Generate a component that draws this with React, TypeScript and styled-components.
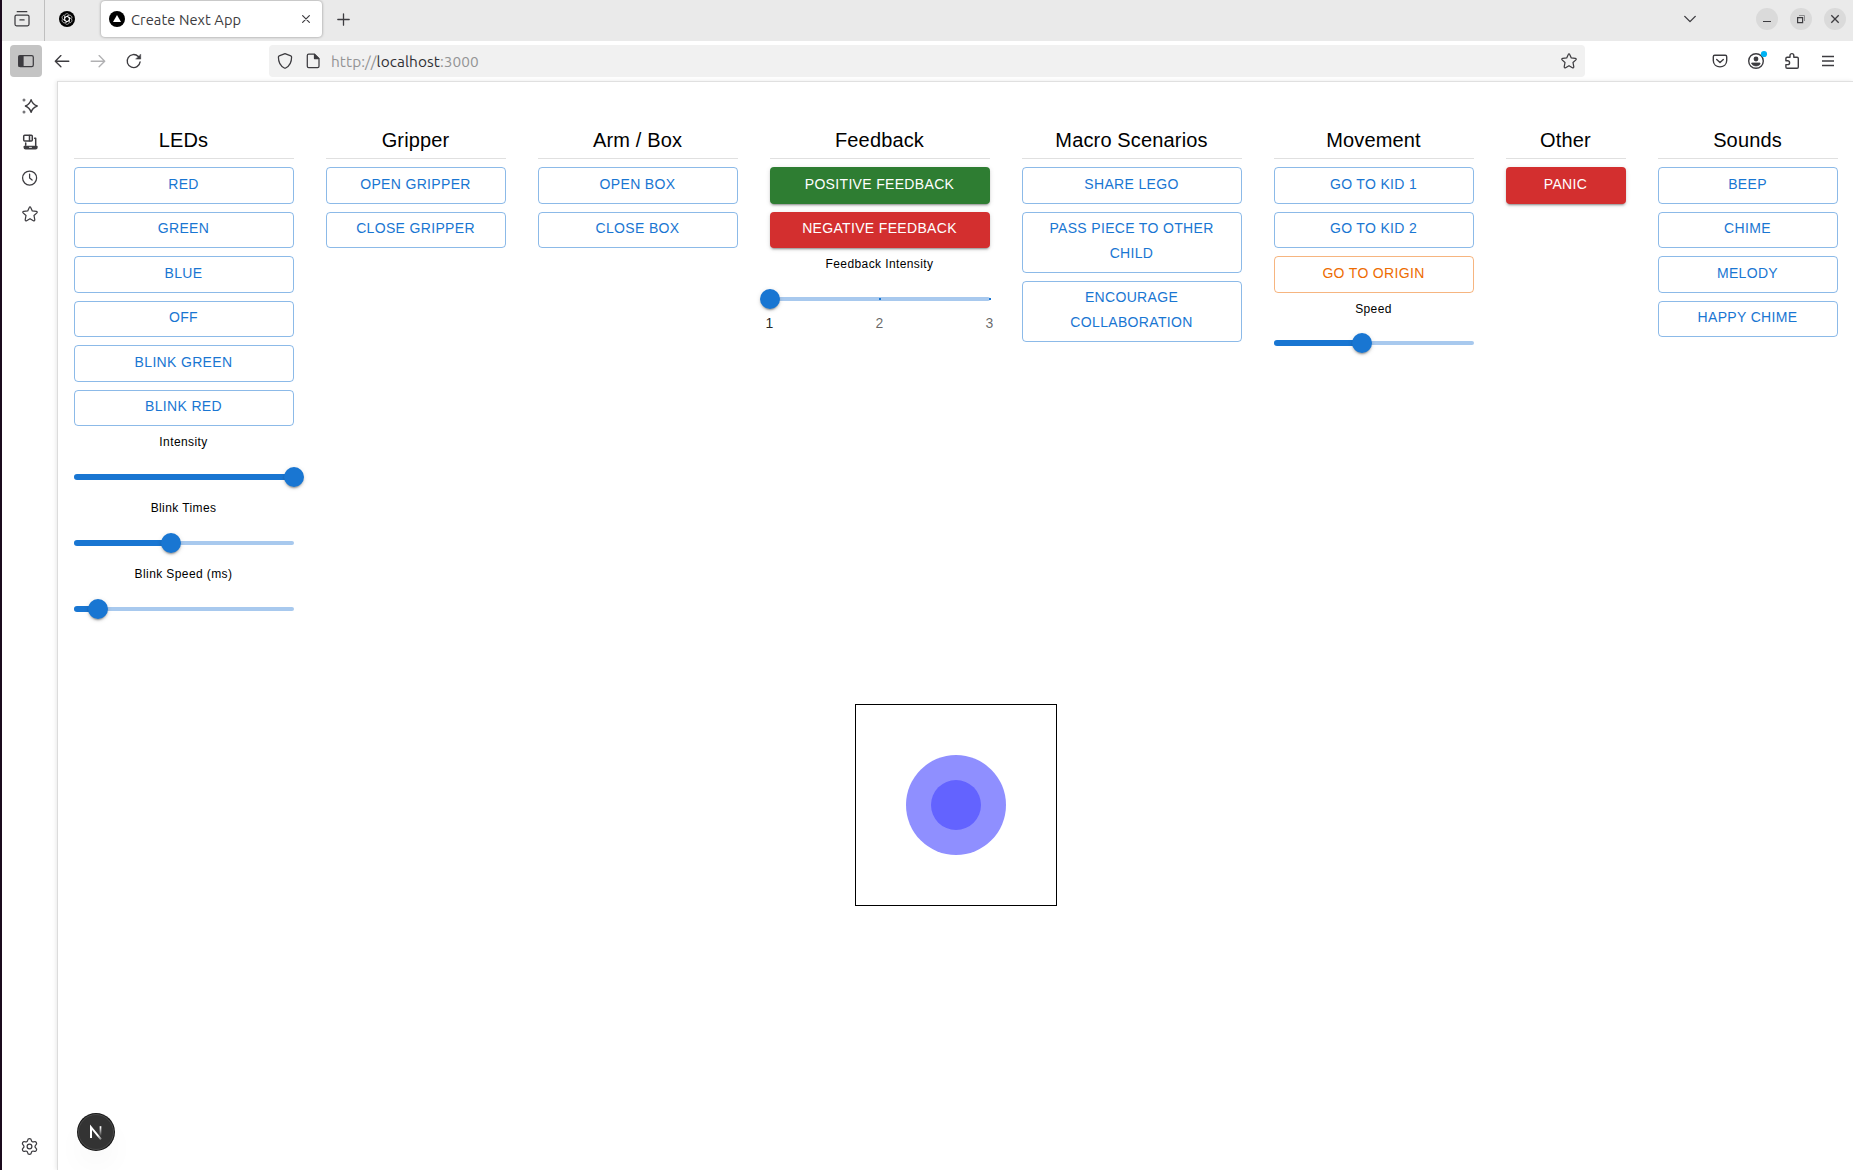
import React from "react";
import styled, { createGlobalStyle, css } from "styled-components";
import { Settings } from "lucide-react";

const GlobalStyle = createGlobalStyle`
  *, *::before, *::after { box-sizing: border-box; }
  html, body { margin: 0; padding: 0; background: #fff; }
  body { overflow: hidden; }
`;

const appFont = `"Liberation Sans", Helvetica, Arial, sans-serif`;
const chromeFont = `Ubuntu, "Open Sans", "Noto Sans", sans-serif`;

const Window = styled.div`
  width: 1853px;
  height: 1170px;
  display: flex;
  flex-direction: column;
  background: #fff;
  border-left: 2px solid #1b0a1d;
  overflow: hidden;
  color: #3d3c40;
`;

/* ---------- tab strip ---------- */

const TabStrip = styled.div`
  height: 41px;
  flex: none;
  display: flex;
  align-items: flex-start;
  background: #eaeaea;
`;

const ArchiveCell = styled.div`
  width: 43px;
  height: 41px;
  padding: 11px 0 0 12px;
  border-right: 1px solid #bfbfbf;
`;

const PinnedTab = styled.div`
  width: 56px;
  height: 41px;
  padding: 11px 0 0 14px;
`;

const ActiveTab = styled.div`
  width: 221px;
  height: 36px;
  margin-top: 1px;
  padding: 0 10px 0 8px;
  display: flex;
  align-items: center;
  border-radius: 4px;
  background: #fff;
  box-shadow: 0 0 3px rgba(0, 0, 0, 0.4);
`;

const TabTitle = styled.span`
  flex: 1;
  margin-left: 6px;
  padding-top: 1px;
  font: 14.667px/20px ${chromeFont};
  letter-spacing: 0.08px;
  white-space: nowrap;
`;

const NewTab = styled.div`
  padding: 13px 0 0 15px;
  line-height: 0;
`;

const WindowControls = styled.div`
  margin-left: auto;
  display: flex;
  align-items: flex-start;
  padding: 8px 7px 0 0;
`;

const TabListButton = styled.div`
  width: 14px;
  margin: 4px 59px 0 0;
  line-height: 0;
`;

const ControlButton = styled.div`
  width: 22px;
  height: 22px;
  margin-left: 12px;
  border-radius: 50%;
  background: #dadada;
  line-height: 0;
  &:nth-child(2) { margin-left: 0; }
`;

/* ---------- toolbar ---------- */

const Toolbar = styled.div`
  height: 40px;
  flex: none;
  display: flex;
  align-items: center;
  padding: 0 17px 0 8px;
`;

const SidebarToggle = styled.div`
  width: 32px;
  height: 32px;
  display: grid;
  place-items: center;
  border-radius: 4px;
  background: #c4c4c4;
`;

const NavIcons = styled.div`
  display: flex;
  gap: 20px;
  margin-left: 12px;
`;

const UrlBar = styled.div`
  width: 1316px;
  height: 32px;
  margin-left: 127px;
  padding: 0 8px;
  display: flex;
  align-items: center;
  border-radius: 4px;
  background: #f1f1f1;
`;

const UrlIcons = styled.div`
  display: flex;
  gap: 12px;
  width: 54px;
`;

const Url = styled.span`
  flex: 1;
  padding-top: 1px;
  font: 15.4px/20px ${chromeFont};
  letter-spacing: 0.08px;
  color: #949495;
  white-space: pre;
  b { font-weight: 400; color: #303035; }
`;

const ToolbarActions = styled.div`
  display: flex;
  gap: 20px;
  margin-left: auto;
`;

const IconSvg = styled.svg`
  display: block;
  flex: none;
  overflow: visible;
`;

/* ---------- body ---------- */

const Main = styled.div`
  flex: 1;
  display: flex;
  min-height: 0;
`;

const Sidebar = styled.nav`
  width: 55px;
  flex: none;
  display: flex;
  flex-direction: column;
  gap: 20px;
  padding: 17px 0 16px 20px;
`;

const GearIcon = styled(Settings)`
  width: 19px;
  height: 19px;
  margin: auto 0 -1.5px -2px;
  color: #3d3c40;
`;

const Page = styled.main`
  position: relative;
  flex: 1;
  display: flex;
  flex-direction: column;
  align-items: center;
  border-top: 1px solid #e0e0e0;
  border-left: 1px solid #dcdcdc;
  box-shadow: -1px 0 4px rgba(0, 0, 0, 0.09);
  font-family: ${appFont};
  color: #000;
`;

const Columns = styled.div`
  height: 622px;
  flex: none;
  display: flex;
  align-items: flex-start;
  gap: 32px;
  padding-top: 40px;
`;

const Column = styled.section<{ $width: number }>`
  width: ${(p) => p.$width}px;
  display: flex;
  flex-direction: column;
  gap: 8px;
`;

const Heading = styled.h6`
  margin: 0;
  height: 37px;
  padding-top: 2px;
  border-bottom: 1px solid #e0e0e0;
  font-size: 20px;
  font-weight: 400;
  line-height: 32px;
  letter-spacing: 0.15px;
  text-align: center;
  white-space: nowrap;
`;

type Variant = "outlined" | "warning" | "success" | "error";

const filled = css`
  padding: 4.625px 16px 7.375px;
  color: #fff;
  box-shadow: 0 3px 1px -2px rgba(0, 0, 0, 0.2), 0 2px 2px rgba(0, 0, 0, 0.14),
    0 1px 5px rgba(0, 0, 0, 0.12);
`;

const variants = {
  outlined: css`color: #1976d2; border: 1px solid rgba(25, 118, 210, 0.5);`,
  warning: css`color: #ed6c02; border: 1px solid rgba(237, 108, 2, 0.5);`,
  success: css`${filled} background: #2e7d32;`,
  error: css`${filled} background: #d32f2f;`,
};

const Button = styled.button<{ $variant: Variant }>`
  width: 100%;
  margin: 0;
  padding: 3.625px 15px 6.375px;
  border: 0;
  border-radius: 4px;
  background: transparent;
  font-family: inherit;
  font-size: 14px;
  line-height: 24.5px;
  letter-spacing: 0.33px;
  text-transform: uppercase;
  text-align: center;
  ${(p) => variants[p.$variant]}
`;

const Caption = styled.span`
  display: block;
  height: 19.92px;
  font-size: 12px;
  line-height: 17px;
  letter-spacing: 0.4px;
  text-align: center;
`;

const SliderRoot = styled.div`
  position: relative;
  height: 30px;
  padding: 13px 0;
`;

const Rail = styled.div`
  height: 4px;
  border-radius: 4px;
  background: #a8c9ee;
`;

const Track = styled.div`
  position: absolute;
  left: 0;
  top: 12px;
  height: 6px;
  border-radius: 3px;
  background: #1976d2;
`;

const Thumb = styled.div`
  position: absolute;
  top: 5px;
  width: 20px;
  height: 20px;
  margin-left: -10px;
  border-radius: 50%;
  background: #1976d2;
  box-shadow: 0 3px 1px -2px rgba(0, 0, 0, 0.2), 0 2px 2px rgba(0, 0, 0, 0.14),
    0 1px 5px rgba(0, 0, 0, 0.12);
`;

const Mark = styled.i`
  position: absolute;
  top: 14px;
  width: 2px;
  height: 2px;
  margin-left: -1px;
  background: #1976d2;
`;

const MarkLabel = styled.span<{ $active: boolean }>`
  position: absolute;
  top: 29px;
  transform: translateX(-50%);
  font-size: 14px;
  line-height: 20px;
  color: ${(p) => (p.$active ? "rgba(0,0,0,.87)" : "rgba(0,0,0,.6)")};
`;

const JoystickFrame = styled.div`
  width: 202px;
  height: 202px;
  display: grid;
  place-items: center;
  border: 1px solid #000;
`;

const JoystickRange = styled.div`
  width: 100px;
  height: 100px;
  display: grid;
  place-items: center;
  border-radius: 50%;
  background: #8f8fff;
`;

const JoystickStick = styled.div`
  width: 50px;
  height: 50px;
  border-radius: 50%;
  background: #6363ff;
`;

const DevBadge = styled.div`
  position: absolute;
  left: 20px;
  bottom: 20px;
  width: 36px;
  height: 36px;
  border-radius: 50%;
  background: #333;
  border: 1px solid #4a4a4a;
  box-shadow: 0 0 0 1px #171717, 0 16px 32px -8px rgba(0, 0, 0, 0.1);
`;

/* ---------- icons ---------- */

type IconProps = { size?: number; children: React.ReactNode; opacity?: number; w?: number };

const Icon = ({ size = 16, children, opacity = 1, w = 1.25 }: IconProps) => (
  <IconSvg
    width={size}
    height={size}
    viewBox="0 0 16 16"
    fill="none"
    stroke="#3d3c40"
    strokeWidth={w}
    strokeLinecap="round"
    strokeLinejoin="round"
    opacity={opacity}
  >
    {children}
  </IconSvg>
);

const StarIcon = () => (
  <Icon>
    <path d="M7.400 1.200c.2-.5 1-.5 1.200 0l1.700 3.700 4 .5c.9.1 1.200.9.6 1.500l-2.900 2.600.8 4.300c.1.8-.7 1.300-1.400.9L8 12.700l-3.400 2c-.7.4-1.500-.1-1.400-.9l.8-4.300-2.900-2.600c-.6-.6-.3-1.400.6-1.500l4-.5z" />
  </Icon>
);

const ArchiveIcon = () => (
  <Icon>
    <path d="M3.200.7h9.600M1 5.600c0-.9.600-1.500 1.500-1.500h11c.9 0 1.500.6 1.500 1.500v7.700c0 .9-.6 1.500-1.500 1.500h-11c-.9 0-1.500-.6-1.500-1.500zM5.900 8.900h4.200" />
  </Icon>
);

const KnotFavicon = () => (
  <IconSvg width="16" height="16" viewBox="0 0 16 16" fill="none">
    <circle cx="8" cy="8" r="8" fill="#000" />
    <g stroke="#fff" strokeWidth=".6">
      {[0, 60, 120, 180, 240, 300].map((angle) => (
        <path
          key={angle}
          transform={`rotate(${angle} 8 8)`}
          d="M5.700 9.300V5.100c0-2.600 3.200-3.200 4.300-1.300M5.700 6.600l2.300-1.300 3.500 2"
        />
      ))}
    </g>
  </IconSvg>
);

const TriangleFavicon = () => (
  <IconSvg width="16" height="16" viewBox="0 0 16 16">
    <circle cx="8" cy="8" r="8" fill="#000" />
    <path d="M8 4l4 7H4z" fill="#fff" />
  </IconSvg>
);

const SidebarIcon = () => (
  <Icon>
    <rect x=".7" y="2.600" width="14.600" height="11" rx="1.600" />
    <path d="M1 3h4v10.200H1z" fill="#3d3c40" />
  </Icon>
);

const BackIcon = () => (
  <Icon w={1.35}>
    <path d="M14.800 8.200H1.400M6.900 2.600L1.300 8.200l5.600 5.600" />
  </Icon>
);

const ForwardIcon = () => (
  <Icon w={1.35} opacity={0.4}>
    <path d="M1.200 8.200h13.400M9.100 2.600l5.600 5.600-5.600 5.600" />
  </Icon>
);

const ReloadIcon = () => (
  <Icon w={1.35}>
    <path d="M14.100 8.900a6.500 6.500 0 1 1-1.800-5.400l1.500 1.500" />
    <path d="M14.700 1.400v4.700H10z" fill="#3d3c40" strokeWidth=".5" />
  </Icon>
);

const ShieldIcon = () => (
  <Icon>
    <path d="M8 .7l5.800 2.200c.5.200.8.600.8 1.100 0 4.800-1.500 8.700-5.900 11-.5.300-.9.300-1.400 0C2.900 12.700 1.400 8.800 1.400 4c0-.5.300-.9.800-1.100z" />
  </Icon>
);

const PageIcon = () => (
  <Icon>
    <path d="M3.700 1.200h5.800l4.500 4.500v7.600c0 .8-.6 1.400-1.400 1.400H3.700c-.8 0-1.400-.6-1.400-1.400V2.600c0-.8.600-1.400 1.400-1.400z" />
    <path d="M9.500 1.400v4.200h4.300z" fill="#3d3c40" />
  </Icon>
);

const PocketIcon = () => (
  <Icon w={1.4}>
    <path d="M2.700 2.300h10.600c.8 0 1.400.6 1.400 1.400v3.900c0 8.300-13.400 8.300-13.400 0V3.700c0-.8.600-1.400 1.400-1.400zM4.700 6.500L8 9.600l3.300-3.100" />
  </Icon>
);

const AccountIcon = () => (
  <Icon w={1.4}>
    <circle cx="8" cy="8" r="7.300" />
    <circle cx="8" cy="6" r="2.400" fill="#3d3c40" stroke="none" />
    <path d="M4 10h8v1.200c-2 2.300-6 2.300-8 0z" fill="#3d3c40" strokeWidth=".8" />
    <circle cx="16" cy="1" r="3.100" fill="#00b3f4" stroke="none" />
  </Icon>
);

const PuzzleIcon = () => (
  <Icon w={1.4}>
    <path d="M6 4.300V2.500a1.900 1.900 0 0 1 3.800 0v1.800h3.300c.7 0 1.200.5 1.200 1.200v8.500c0 .7-.5 1.200-1.200 1.200H3.100c-.7 0-1.200-.5-1.200-1.200v-2.400h1.800a1.900 1.900 0 0 0 0-3.800H1.900V5.500c0-.7.5-1.200 1.200-1.200z" />
  </Icon>
);

const MenuIcon = () => (
  <Icon w={1.3}>
    <path d="M2 3.500h12M2 8h12M2 12.500h12" strokeLinecap="butt" />
  </Icon>
);

const SparkleIcon = () => (
  <Icon w={1.4}>
    <path d="M9.100 1.600c1 3.600 2.100 4.900 6.100 6.400-4 1.500-5.100 2.800-6.100 6.400-1-3.600-2.100-4.900-5.700-6.400 3.600-1.500 4.700-2.800 5.700-6.400z" />
    <circle cx="2" cy="2" r="1.500" fill="#77767a" stroke="none" />
    <circle cx="2" cy="14" r="1.500" fill="#77767a" stroke="none" />
  </Icon>
);

const SyncedIcon = () => (
  <Icon w={1.5}>
    <rect x="1.700" y="1.300" width="8.600" height="5.600" rx="1" />
    <path d="M7.500 1.500v5.300M12.600 4.200h1.100v7.200M3.700 9v2.300" />
    <path d="M2.300 12.500h12.600v1c0 .8-.5 1.300-1.300 1.300H3.600c-.8 0-1.300-.5-1.300-1.300z" fill="#3d3c40" />
    <path d="M7.500 13.400h2" stroke="#fff" strokeWidth=".8" />
  </Icon>
);

const ClockIcon = () => (
  <Icon>
    <circle cx="7.600" cy="8" r="7" />
    <path d="M7.600 4v4l2.500 2" />
  </Icon>
);

const NextMark = () => (
  <IconSvg width="34" height="34" viewBox="0 0 34 34" fill="none">
    <defs>
      <linearGradient id="stem" x1="0" y1="12" x2="0" y2="21" gradientUnits="userSpaceOnUse">
        <stop stopColor="#fff" />
        <stop offset="1" stopColor="#fff" stopOpacity="0" />
      </linearGradient>
      <linearGradient id="slash" x1="19" y1="20" x2="23" y2="25.500" gradientUnits="userSpaceOnUse">
        <stop stopColor="#fff" />
        <stop offset="1" stopColor="#fff" stopOpacity=".2" />
      </linearGradient>
    </defs>
    <path d="M12 23V12.200l10 12.200" stroke="url(#slash)" strokeWidth="2" />
    <path d="M21.500 11.200V21" stroke="url(#stem)" strokeWidth="1.700" />
  </IconSvg>
);

/* ---------- control panel ---------- */

type SliderProps = { value: number; marks?: string[] };

const Slider = ({ value, marks }: SliderProps) => (
  <SliderRoot>
    <Rail />
    {value > 0 && <Track style={{ width: `${value}%` }} />}
    {marks?.map((label, i) => {
      const left = `${(i / (marks.length - 1)) * 100}%`;
      return (
        <React.Fragment key={label}>
          <Mark style={{ left }} />
          <MarkLabel $active={i === 0} style={{ left }}>
            {label}
          </MarkLabel>
        </React.Fragment>
      );
    })}
    <Thumb style={{ left: `${value}%` }} />
  </SliderRoot>
);

type Group = {
  title: string;
  width: number;
  buttons: [string, Variant?][];
  sliders?: (SliderProps & { label: string })[];
};

const groups: Group[] = [
  {
    title: "LEDs",
    width: 220,
    buttons: [["Red"], ["Green"], ["Blue"], ["Off"], ["Blink Green"], ["Blink Red"]],
    sliders: [
      { label: "Intensity", value: 100 },
      { label: "Blink Times", value: 44.44 },
      { label: "Blink Speed (ms)", value: 11.11 },
    ],
  },
  { title: "Gripper", width: 180, buttons: [["Open Gripper"], ["Close Gripper"]] },
  { title: "Arm / Box", width: 200, buttons: [["Open Box"], ["Close Box"]] },
  {
    title: "Feedback",
    width: 220,
    buttons: [["Positive Feedback", "success"], ["Negative Feedback", "error"]],
    sliders: [{ label: "Feedback Intensity", value: 0, marks: ["1", "2", "3"] }],
  },
  {
    title: "Macro Scenarios",
    width: 220,
    buttons: [["Share Lego"], ["Pass piece to other child"], ["Encourage collaboration"]],
  },
  {
    title: "Movement",
    width: 200,
    buttons: [["Go to Kid 1"], ["Go to Kid 2"], ["Go to Origin", "warning"]],
    sliders: [{ label: "Speed", value: 44.44 }],
  },
  { title: "Other", width: 120, buttons: [["Panic", "error"]] },
  { title: "Sounds", width: 180, buttons: [["Beep"], ["Chime"], ["Melody"], ["Happy Chime"]] },
];

export default function App() {
  return (
    <>
      <GlobalStyle />
      <Window>
        <TabStrip>
          <ArchiveCell><ArchiveIcon /></ArchiveCell>
          <PinnedTab><KnotFavicon /></PinnedTab>
          <ActiveTab>
            <TriangleFavicon />
            <TabTitle>Create Next App</TabTitle>
            <Icon size={12} w={1.6}><path d="M3.500 3.500l9 9M12.500 3.500l-9 9" /></Icon>
          </ActiveTab>
          <NewTab>
            <Icon size={13} w={1.6}><path d="M8 1v14M1 8h14" /></Icon>
          </NewTab>
          <WindowControls>
            <TabListButton>
              <Icon size={14} w={1.6}><path d="M2 5l6 6 6-6" /></Icon>
            </TabListButton>
            <ControlButton>
              <IconSvg width="22" height="22" stroke="#3d3c40" strokeWidth="1"><path d="M7 13.500h8" /></IconSvg>
            </ControlButton>
            <ControlButton>
              <IconSvg width="22" height="22" fill="none" stroke="#3d3c40" strokeWidth="1.200">
                <path d="M7.600 9.600h5v5h-5z" />
                <path d="M9 7.500h5.500V13" stroke="#8d8d8f" strokeWidth="1" />
              </IconSvg>
            </ControlButton>
            <ControlButton>
              <IconSvg width="22" height="22" stroke="#3d3c40" strokeWidth="1.300"><path d="M7.300 7.300l7.400 7.400M14.700 7.300l-7.400 7.400" /></IconSvg>
            </ControlButton>
          </WindowControls>
        </TabStrip>

        <Toolbar>
          <SidebarToggle><SidebarIcon /></SidebarToggle>
          <NavIcons>
            <BackIcon />
            <ForwardIcon />
            <ReloadIcon />
          </NavIcons>
          <UrlBar>
            <UrlIcons>
              <ShieldIcon />
              <PageIcon />
            </UrlIcons>
            <Url>http://<b>localhost</b>:3000</Url>
            <StarIcon />
          </UrlBar>
          <ToolbarActions>
            <PocketIcon />
            <AccountIcon />
            <PuzzleIcon />
            <MenuIcon />
          </ToolbarActions>
        </Toolbar>

        <Main>
          <Sidebar>
            <SparkleIcon />
            <SyncedIcon />
            <ClockIcon />
            <StarIcon />
            <GearIcon strokeWidth={1.6} />
          </Sidebar>
          <Page>
            <Columns>
              {groups.map((group) => (
                <Column key={group.title} $width={group.width}>
                  <Heading>{group.title}</Heading>
                  {group.buttons.map(([label, variant = "outlined"]) => (
                    <Button key={label} $variant={variant}>{label}</Button>
                  ))}
                  {group.sliders?.map(({ label, ...slider }) => (
                    <React.Fragment key={label}>
                      <Caption>{label}</Caption>
                      <Slider {...slider} />
                    </React.Fragment>
                  ))}
                </Column>
              ))}
            </Columns>
            <JoystickFrame>
              <JoystickRange>
                <JoystickStick />
              </JoystickRange>
            </JoystickFrame>
            <DevBadge><NextMark /></DevBadge>
          </Page>
        </Main>
      </Window>
    </>
  );
}
